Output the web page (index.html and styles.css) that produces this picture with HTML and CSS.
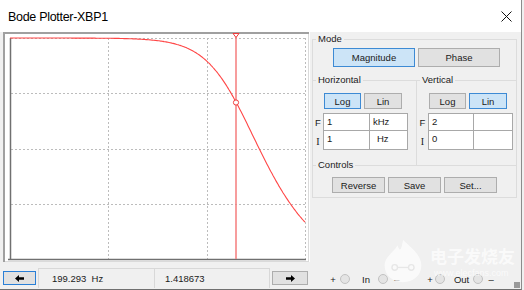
FILE: index.html
```html
<!DOCTYPE html>
<html>

<head>
    <meta charset="utf-8" />
    <title>Bode Plotter-XBP1</title>
    <link rel="stylesheet" href="styles.css">
</head>

<body>
    <div class="window">
        <div class="titlebar">
            <span class="title">Bode Plotter-XBP1</span>
            <svg class="close" width="11" height="11" viewBox="0 0 11 11">
                <path d="M0.5 0.5L10.5 10.5M10.5 0.5L0.5 10.5" stroke="#111" stroke-width="1" fill="none" />
            </svg>
        </div>

        <div class="client">
            <div class="scope">
                <svg class="plot" width="307" height="230" viewBox="3 32 307 230">
                    <rect x="3" y="32" width="307" height="230" fill="#fff" />
                    <path d="M3 33H309M4 32V262" stroke="#a0a0a0" stroke-width="2" fill="none" />
                    <path d="M308.5 34V262M5 261.5H309" stroke="#dadada" fill="none" />
                    <g stroke="#bcbcbc" stroke-dasharray="2 2" fill="none">
                        <path d="M108.5 38V259M207.5 38V259M305.5 38V259" />
                        <path d="M11 38.5H305M11 93.5H305M11 149.5H305M11 204.5H305" />
                    </g>
                    <path d="M10.5 38V260M8 259.5H306" stroke="#707070" stroke-width="1.5" fill="none" />
                    <polyline id="curve" fill="none" stroke="#ff4646" stroke-width="1.1" />
                    <path d="M236 34V259" stroke="#f47c7c" stroke-width="1.5" fill="none" />
                    <polygon points="233,33.5 239,33.5 236,37.5" fill="#fff" stroke="#f03c3c" stroke-width="1" />
                    <circle cx="236" cy="102.5" r="2.6" fill="#fff" stroke="#f03c3c" stroke-width="1" />
                </svg>

                <div class="status">
                    <button class="arrow focus">
                        <svg width="9" height="7" viewBox="0 0 9 7"><path d="M0 3.5L4 0V2.3H9V4.7H4V7Z" fill="#000" /></svg>
                    </button>
                    <div class="field freq">199.293&nbsp; Hz</div>
                    <div class="field value">1.418673</div>
                    <button class="arrow">
                        <svg width="9" height="7" viewBox="0 0 9 7"><path d="M9 3.5L5 0V2.3H0V4.7H5V7Z" fill="#000" /></svg>
                    </button>
                </div>
            </div>

            <div class="side">
                <fieldset class="group mode">
                    <legend>Mode</legend>
                    <div class="mode-row">
                        <button class="btn big on">Magnitude</button>
                        <button class="btn big">Phase</button>
                    </div>

                    <div class="axes">
                        <fieldset class="group sub horiz">
                            <legend>Horizontal</legend>
                            <div class="scale-row">
                                <button class="btn small on">Log</button>
                                <button class="btn small">Lin</button>
                            </div>
                            <div class="entry">
                                <span class="lbl">F</span>
                                <span class="cell">1</span>
                                <span class="cell">kHz</span>
                                <span class="lbl serif">I</span>
                                <span class="cell">1</span>
                                <span class="cell unit-hz">Hz</span>
                            </div>
                        </fieldset>

                        <fieldset class="group sub vert">
                            <legend>Vertical</legend>
                            <div class="scale-row">
                                <button class="btn small">Log</button>
                                <button class="btn small on">Lin</button>
                            </div>
                            <div class="entry">
                                <span class="lbl">F</span>
                                <span class="cell">2</span>
                                <span class="cell"></span>
                                <span class="lbl serif">I</span>
                                <span class="cell">0</span>
                                <span class="cell"></span>
                            </div>
                        </fieldset>
                    </div>

                    <fieldset class="group sub controls">
                        <legend>Controls</legend>
                        <div class="ctrl-row">
                            <button class="btn ctrl">Reverse</button>
                            <button class="btn ctrl">Save</button>
                            <button class="btn ctrl">Set...</button>
                        </div>
                    </fieldset>
                </fieldset>

                <div class="terminals">
                    <span class="sign plus">+</span>
                    <span class="pin p-in-plus"></span>
                    <span class="term t-in">In</span>
                    <span class="pin p-in-minus"></span>
                    <span class="sign minus m-in">&ndash;</span>
                    <span class="sign plus p-out">+</span>
                    <span class="pin p-out-plus"></span>
                    <span class="term t-out">Out</span>
                    <span class="pin p-out-minus"></span>
                    <span class="sign minus m-out">&ndash;</span>
                </div>
            </div>
        </div>

        <div class="watermark">
            <svg class="wm-logo" width="42" height="46" viewBox="0 0 44 50">
                <path d="M22 2C30 10 42 18 42 30C42 41 33 48 22 48C11 48 2 41 2 30C2 20 12 16 16 8C18 14 20 16 22 2Z"
                    fill="#fff" />
                <circle cx="13" cy="32" r="3" fill="none" stroke="#e4e4e4" stroke-width="1.5" />
                <circle cx="31" cy="32" r="3" fill="none" stroke="#e4e4e4" stroke-width="1.5" />
                <path d="M16 32H28" stroke="#e4e4e4" stroke-width="1.5" />
            </svg>
            <div class="wm-text">
                <div class="wm-cn">电子发烧友</div>
                <div class="wm-url">www.elecfans.com</div>
            </div>
        </div>
        <div class="grip"></div>
    </div>

    <script>
        // magnitude curve: log frequency 1 Hz .. 1 kHz, linear gain 0 .. 2
        const curve = document.getElementById('curve');
        const pts = [];
        for (let x = 10; x <= 305; x += 1) {
            const f = Math.pow(10, (x - 10) / 295 * 3);
            const g = 2 / Math.sqrt((1 + (f / 204) ** 2) * (1 + (f / 1500) ** 2));
            const y = 259 - Math.min(g, 2) / 2 * 221;
            pts.push(x + ',' + y.toFixed(1));
        }
        curve.setAttribute('points', pts.join(' '));
    </script>
</body>

</html>
```

FILE: styles.css
```css
* {
    box-sizing: border-box;
}

body {
    margin: 0;
    background-color: #f0f0f0;
    font-family: 'Liberation Sans', Arial, sans-serif;
    color: #1a1a1a;
    overflow: hidden;
}

.window {
    position: relative;
    width: 522px;
    height: 290px;
    display: flex;
    flex-direction: column;
    border-right: 1px solid #8c8c8c;
    border-bottom: 1px solid #707070;
    overflow: hidden;
}

/* Заголовок окна */
.titlebar {
    height: 32px;
    flex: none;
    display: flex;
    align-items: center;
    justify-content: space-between;
    padding: 1px 9px 0 8px;
    background-color: #ffffff;
}

.title {
    font-size: 12.5px;
    letter-spacing: -0.3px;
    color: #000;
}

.close {
    display: block;
}

.client {
    flex: 1;
    display: flex;
}

/* Экран плоттера */
.scope {
    width: 310px;
    display: flex;
    flex-direction: column;
}

.plot {
    display: block;
    margin-left: 3px;
}

.status {
    display: flex;
    align-items: flex-start;
    padding-top: 6px;
    font-size: 9.5px;
}

.arrow {
    width: 33px;
    height: 14px;
    margin-top: 3px;
    margin-left: 3px;
    padding: 0;
    display: flex;
    align-items: center;
    justify-content: center;
    border: 1px solid #adadad;
    background-color: #e1e1e1;
}

.arrow.focus {
    border-color: #2a7fd6;
}

.arrow:last-child {
    width: 36px;
    margin-left: 2px;
}

.field {
    height: 20px;
    line-height: 19px;
    padding-left: 13px;
    border: 1px solid #d8d8d8;
    border-bottom: none;
}

.field.freq {
    width: 117px;
    margin-left: 2px;
}

.field.value {
    width: 115px;
    padding-left: 10px;
    border-left: none;
}

/* Панель управления */
.side {
    width: 205px;
    margin-left: 2px;
    display: flex;
    flex-direction: column;
    justify-content: space-between;
}

.group {
    margin: 0;
    padding: 0;
    min-width: 0;
    border: 1px solid #dcdcdc;
}

.group legend {
    margin-left: 3px;
    padding: 0 2px;
    font-size: 9.5px;
    line-height: 12px;
    color: #1a1a1a;
}

.mode {
    margin-top: 1px;
}

.sub {
    border: none;
    border-top: 1px solid #dcdcdc;
}

.btn {
    padding: 0;
    font-family: inherit;
    font-size: 9.5px;
    color: #1a1a1a;
    border: 1px solid #adadad;
    background-color: #e1e1e1;
}

.btn.on {
    border-color: #3d8ad4;
    background-color: #cce4f7;
}

.mode-row {
    display: flex;
    gap: 3px;
    margin-top: 3px;
    padding-left: 20px;
}

.btn.big {
    width: 82px;
    height: 19px;
}

.axes {
    display: flex;
    margin-top: 7px;
}

.horiz {
    width: 104px;
    padding-bottom: 15px;
    border-right: 1px solid #dcdcdc;
}

.vert {
    flex: 1;
}

.scale-row {
    display: flex;
    gap: 3px;
    margin-top: 7px;
    padding-left: 11px;
}

.vert .scale-row {
    padding-left: 12px;
}

.btn.small {
    width: 37px;
    height: 16px;
}

.btn.small + .btn.small {
    width: 38px;
}

.entry {
    display: grid;
    grid-template-columns: 10px 47px 38px;
    grid-template-rows: 18px 19px;
    margin-top: 4px;
    font-size: 9.5px;
}

.vert .entry {
    grid-template-columns: 11px 46px 39px;
}

.lbl {
    display: flex;
    align-items: center;
    justify-content: center;
    padding-top: 1px;
}

.lbl.serif {
    font-family: 'Liberation Serif', serif;
    font-size: 10px;
}

.cell {
    padding: 2px 0 0 3px;
    line-height: 12px;
    background-color: #ffffff;
    border: 1px solid #a8a8a8;
}

.cell:nth-child(3),
.cell:nth-child(6) {
    border-left: none;
}

.cell:nth-child(5),
.cell:nth-child(6) {
    border-top: none;
}

.cell.unit-hz {
    padding-left: 7px;
}

.controls {
    margin-top: -6px;
    padding-bottom: 4px;
}

.ctrl-row {
    display: flex;
    gap: 3px;
    margin-top: 6px;
    padding-left: 19px;
}

.btn.ctrl {
    width: 53px;
    height: 16px;
}

/* Клеммы */
.terminals {
    display: flex;
    align-items: center;
    height: 14px;
    margin-bottom: 3px;
    padding-left: 18px;
    font-size: 9.5px;
}

.sign {
    width: 6px;
    text-align: center;
}

.pin {
    width: 10px;
    height: 10px;
    margin-left: 4px;
    border-radius: 50%;
    border: 1.5px solid #c2c2c2;
    background-color: #e4e4e4;
}

.t-in {
    margin-left: 12px;
}

.p-in-minus {
    margin-left: 8px;
}

.m-in {
    margin-left: 6px;
}

.p-out {
    margin-left: 27px;
}

.p-out-plus {
    margin-left: 2px;
}

.t-out {
    margin-left: 9px;
}

.m-out {
    margin-left: 5px;
}

/* Водяной знак */
.watermark {
    position: absolute;
    left: 382px;
    top: 238px;
    display: flex;
    align-items: flex-start;
    gap: 6px;
    opacity: 0.7;
    pointer-events: none;
}

.wm-cn {
    margin-top: 8px;
    font-family: 'Noto Sans CJK SC', sans-serif;
    font-size: 17px;
    font-weight: 700;
    line-height: 20px;
    color: #ffffff;
}

.wm-url {
    margin-top: 2px;
    margin-left: 4px;
    font-size: 9px;
    line-height: 11px;
    color: #ffffff;
}

.grip {
    position: absolute;
    right: 1px;
    bottom: 1px;
    width: 6px;
    height: 6px;
    background-image: radial-gradient(circle, #9a9a9a 0.8px, transparent 1px);
    background-size: 2px 2px;
}
```
